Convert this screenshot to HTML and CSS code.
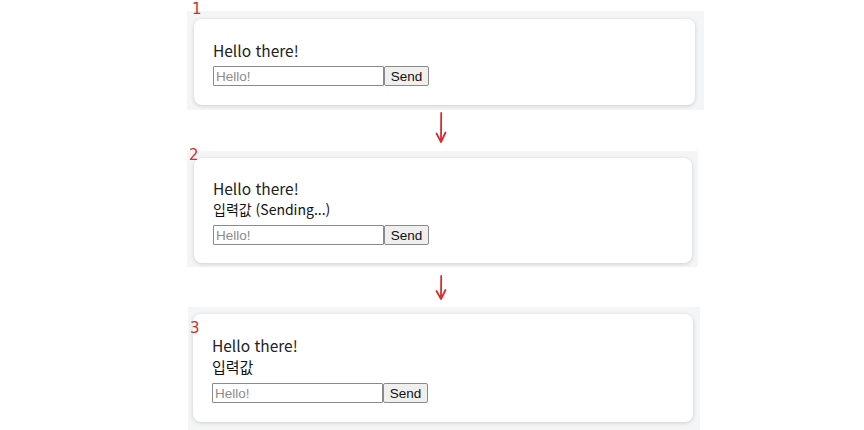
FILE: index.html
```html
<!DOCTYPE html>
<html lang="ko">
<head>
<meta charset="utf-8">
<title>Steps</title>
<link rel="stylesheet" href="styles.css">
</head>
<body>
<div class="steps">
  <section class="panel panel-1">
    <span class="step-no step-no-1">1</span>
    <div class="card">
      <p class="greeting">Hello there!</p>
      <form class="composer">
        <input class="composer-input" type="text" placeholder="Hello!">
        <button class="composer-send" type="button">Send</button>
      </form>
    </div>
  </section>

  <div class="arrow arrow-1">
    <svg width="12" height="32" viewBox="0 0 12 32"><path d="M6.2 1 L6 30 M1.5 21.5 L6 30 L10.5 20.5" fill="none" stroke="#d32f2f" stroke-width="1.8" stroke-linecap="round" stroke-linejoin="round"/></svg>
  </div>

  <section class="panel panel-2">
    <span class="step-no step-no-2">2</span>
    <div class="card">
      <p class="greeting">Hello there!</p>
      <p class="message">입력값 (Sending...)</p>
      <form class="composer">
        <input class="composer-input" type="text" placeholder="Hello!">
        <button class="composer-send" type="button">Send</button>
      </form>
    </div>
  </section>

  <div class="arrow arrow-2">
    <svg width="12" height="26" viewBox="0 0 12 26"><path d="M6.2 1 L6 24 M1.5 16 L6 24 L10.5 15" fill="none" stroke="#d32f2f" stroke-width="1.8" stroke-linecap="round" stroke-linejoin="round"/></svg>
  </div>

  <section class="panel panel-3">
    <span class="step-no step-no-3">3</span>
    <div class="card">
      <p class="greeting">Hello there!</p>
      <p class="message">입력값</p>
      <form class="composer">
        <input class="composer-input" type="text" placeholder="Hello!">
        <button class="composer-send" type="button">Send</button>
      </form>
    </div>
  </section>
</div>
</body>
</html>
```

FILE: styles.css
```css
html, body {
  margin: 0;
  padding: 0;
  background: #ffffff;
}

body {
  font-family: "Noto Sans CJK KR", "Noto Sans", sans-serif;
  color: #222;
  overflow: hidden;
}

.steps {
  display: flex;
  flex-direction: column;
  margin-left: 187px;
  padding-top: 11px;
  width: 517px;
}

.panel {
  position: relative;
  background: #f4f5f6;
  box-sizing: border-box;
}

.panel-1 {
  width: 517px;
  padding: 8px 9px 5px 7px;
}

.panel-2 {
  width: 511px;
  padding: 7px 6px 4px 7px;
}

.panel-3 {
  width: 512px;
  margin-left: 1px;
  padding: 7px 7px 8px 5px;
}

.card {
  background: #fff;
  border-radius: 8px;
  box-shadow: 0 1px 4px rgba(0, 0, 0, 0.16);
  padding: 20px 19px 19px;
}

.panel-2 .card {
  padding-top: 19px;
  padding-bottom: 18px;
}

.panel-3 .card {
  padding-top: 20px;
  padding-bottom: 19px;
}

.greeting {
  margin: 0;
  font-size: 15.5px;
  line-height: 22px;
}

.message {
  margin: 0;
  font-size: 14px;
  line-height: 21px;
  color: #111;
}

.panel-3 .message {
  font-size: 15px;
  line-height: 22px;
}

.composer {
  display: flex;
  margin-top: 5px;
}

.composer-input {
  box-sizing: border-box;
  width: 171px;
  height: 20px;
  margin: 0;
  padding: 1px 2px;
  border: 1px solid #8a8a8a;
  border-radius: 1px;
  font-family: "Liberation Sans", Arial, sans-serif;
  font-size: 13.5px;
  color: #222;
  background: #fff;
}

.composer-input::placeholder {
  color: #8c8c8c;
}

.composer-send {
  box-sizing: border-box;
  width: 45px;
  height: 20px;
  margin: 0;
  padding: 0;
  border: 1px solid #8a8a8a;
  border-radius: 2px;
  background: #efefef;
  font-family: "Liberation Sans", Arial, sans-serif;
  font-size: 13.5px;
  color: #111;
}

.arrow {
  display: flex;
  justify-content: center;
  width: 508px;
}

.arrow-1 {
  height: 41px;
}

.arrow-1 svg {
  margin-top: 2px;
}

.arrow-2 {
  height: 40px;
}

.arrow-2 svg {
  margin-top: 8px;
}

.step-no {
  position: absolute;
  font-family: "DejaVu Sans", sans-serif;
  font-size: 15px;
  line-height: 15px;
  color: #d32f2f;
  z-index: 2;
}

.step-no-1 {
  left: 5px;
  top: -9px;
}

.step-no-2 {
  left: 2px;
  top: -3px;
}

.step-no-3 {
  left: 2px;
  top: 14px;
}
```
